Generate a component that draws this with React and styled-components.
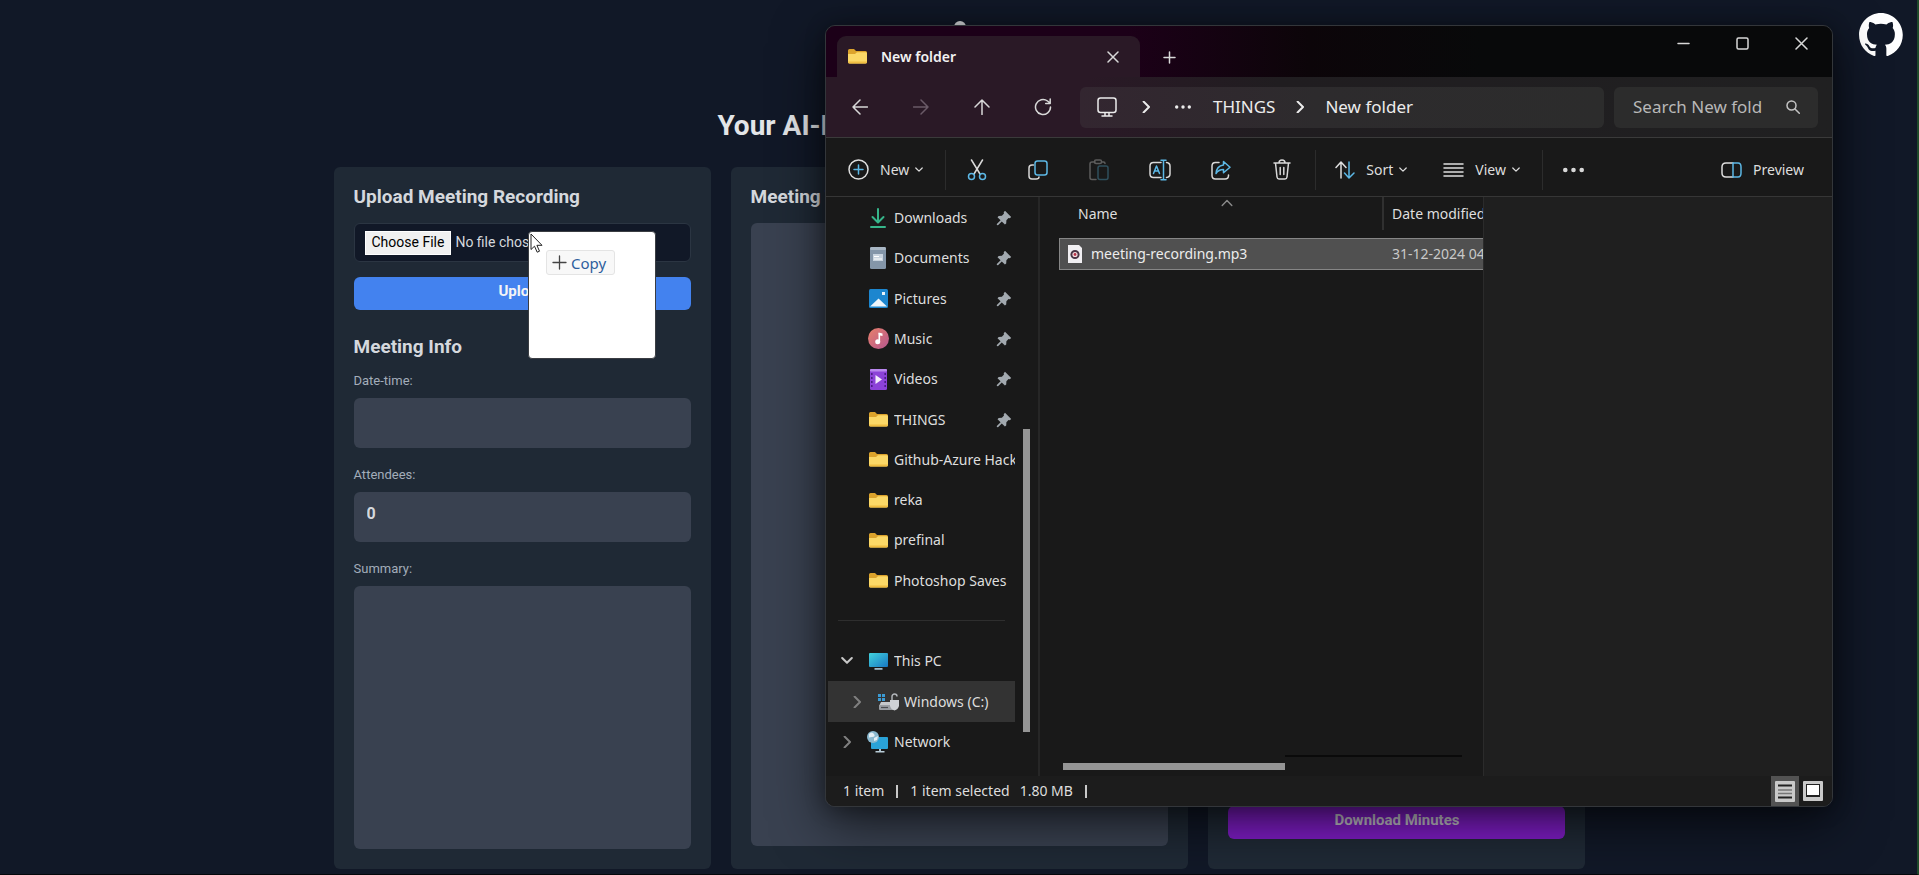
import React from "react";
import styled, { createGlobalStyle } from "styled-components";

const GlobalStyle = createGlobalStyle`
  *, *::before, *::after { box-sizing: border-box; }
  body { margin: 0; background: #111827; }
  button, input, textarea { font: inherit; color: inherit; }
  h1, h2 { margin: 0; }
  svg { display: block; flex: none; }
`;

/* ---------- web page ---------- */

const Page = styled.div`
  position: relative;
  display: flex;
  flex-direction: column;
  align-items: center;
  min-height: 100vh;
  padding: 0 22px 5px 24px;
  overflow: hidden;
  background: #111827;
  border-right: 2px solid #1f4a2a;
  border-bottom: 1px solid #05070b;
  color: #d5d8dd;
  font-family: Roboto, "Liberation Sans", sans-serif;
`;

const PageHeader = styled.header`
  display: flex;
  flex-direction: column;
  align-items: center;
  padding-top: 21px;
  height: 167px;
`;

const PageTitle = styled.h1`
  margin-top: 47px;
  font-size: 28px;
  line-height: 36px;
  font-weight: 700;
  color: #e3e5e8;
`;

const GithubLink = styled.a`
  position: absolute;
  top: 13px;
  right: 14px;
  color: #fff;
`;

const Columns = styled.main`
  flex: 1;
  display: grid;
  grid-template-columns: 14fr 17fr 14fr;
  gap: 20px;
  width: 100%;
  max-width: 1252px;
`;

const Card = styled.section`
  display: flex;
  flex-direction: column;
  padding: 20px 20px ${(p) => p.$bottom || 20}px;
  border-radius: 6px;
  background: #1f2935;
`;

const CardTitle = styled.h2`
  margin-bottom: 16px;
  font-size: 19px;
  line-height: 20px;
  font-weight: 700;
`;

const FileInput = styled.input`
  width: 100%;
  height: 39px;
  padding: 7px 10px;
  border: 1px solid #2b3542;
  border-radius: 6px;
  background: #111827;
  font-size: 14px;
  line-height: 20px;

  &::file-selector-button {
    height: 24px;
    padding: 0 6px 4px;
    margin-right: 4px;
    border: 1px solid #fff;
    background: #f0f0f0;
    color: #000;
    font: inherit;
  }
`;

const ActionButton = styled.button`
  width: 100%;
  height: 33px;
  padding: 0 0 6px;
  border: 0;
  border-radius: 6px;
  background: ${(p) => p.$color};
  color: ${(p) => p.$text || "#f3f4f6"};
  font-size: 15px;
  font-weight: 700;
`;

const UploadForm = styled.form`
  display: flex;
  flex-direction: column;
  gap: 15px;
  margin-bottom: 27px;
`;

const Field = styled.div`
  display: flex;
  flex-direction: column;
  gap: 9px;
  flex: ${(p) => (p.$grow ? 1 : "none")};
  & + & { margin-top: 19px; }
`;

const FieldLabel = styled.label`
  font-size: 13px;
  line-height: 16px;
  color: #a3adba;
`;

const TextInput = styled.input`
  width: 100%;
  height: 50px;
  padding: 0 13px 8px;
  border: 0;
  border-radius: 6px;
  background: #394150;
  font-size: 16px;
  font-weight: 700;
`;

const TextBox = styled.textarea`
  flex: 1;
  width: 100%;
  padding: 12px;
  border: 0;
  border-radius: 6px;
  background: #394150;
  resize: none;
`;

const TranscriptBox = styled.div`
  flex: 1;
  border-radius: 6px;
  background: #394150;
`;

const MinutesBox = styled(TranscriptBox)`
  margin-bottom: 16px;
`;

/* ---------- file manager window ---------- */

const WindowFrame = styled.div`
  position: absolute;
  top: 25px;
  right: 84px;
  bottom: 67px;
  left: 825px;
  display: flex;
  border-radius: 10px;
  box-shadow: 0 16px 52px rgba(0, 0, 0, 0.62), 0 2px 20px rgba(0, 0, 0, 0.3);
`;

const Window = styled.section`
  flex: 1;
  min-width: 0;
  display: flex;
  flex-direction: column;
  overflow: hidden;
  border: 1px solid #33363a;
  border-radius: 10px;
  background: #191919;
  color: #dedede;
  font-family: "Noto Sans", "Open Sans", sans-serif;
  font-size: 14px;
  line-height: 20px;
`;

const TitleBar = styled.div`
  display: flex;
  flex: none;
  align-items: flex-end;
  height: 51px;
  padding-left: 11px;
  background: linear-gradient(90deg, #1c0018 0%, #1c0018 30%, #0c0509 48%, #08090a 65%);
`;

const Tab = styled.div`
  display: flex;
  align-items: center;
  width: 303px;
  height: 41px;
  padding: 0 19px 0 11px;
  border-radius: 9px 9px 0 0;
  background: #2a1926;
  font-weight: 600;
  color: #f2f2f2;
`;

const TabName = styled.span`
  flex: 1;
  margin-left: 14px;
`;

const IconButton = styled.button`
  display: flex;
  align-items: center;
  justify-content: center;
  flex: none;
  width: ${(p) => p.$size || 40}px;
  height: ${(p) => p.$height || 40}px;
  padding: 0;
  border: 0;
  background: none;
  color: ${(p) => (p.$dim ? "#6a5a67" : "#d8d8d8")};
`;

const WindowButtons = styled.div`
  display: flex;
  align-self: flex-start;
  gap: 19px;
  margin-left: auto;
  padding-right: 11px;
`;

const NavBar = styled.div`
  display: flex;
  flex: none;
  align-items: center;
  gap: 10px;
  height: 61px;
  padding: 0 14px;
  border-bottom: 1px solid #3a3a3a;
  background: linear-gradient(90deg, #2a1926 0%, #2a1926 26%, #201d20 45%, #202021 100%);
`;

const NavButtons = styled.div`
  display: flex;
  gap: 21px;
  margin-right: 7px;
`;

const AddressBar = styled.nav`
  display: flex;
  flex: 1;
  align-items: center;
  height: 41px;
  padding-left: 17px;
  border-radius: 6px;
  background: linear-gradient(90deg, #332630, #2d2b2d 45%, #2c2c2c);
  font-size: 17px;
  color: #ececec;
`;

const Crumb = styled.a`
  color: inherit;
  text-decoration: none;
`;

const CrumbGap = styled.span`
  display: flex;
  justify-content: center;
  width: ${(p) => p.$width}px;
`;

const SearchBox = styled.label`
  display: flex;
  align-items: center;
  width: 204px;
  height: 41px;
  padding: 0 18px 0 19px;
  border-radius: 6px;
  background: #2c2c2c;
  color: #c4c4c4;
`;

const SearchInput = styled.input`
  flex: 1;
  min-width: 0;
  padding: 0;
  border: 0;
  background: none;
  font-size: 17px;
  &::placeholder { color: #b8b8b8; opacity: 1; }
`;

const CommandBar = styled.div`
  display: flex;
  flex: none;
  align-items: center;
  height: 59px;
  padding: 5px 28px 0 22px;
  border-bottom: 1px solid #363636;
`;

const CommandButton = styled.button`
  display: flex;
  align-items: center;
  gap: 6px;
  height: 40px;
  padding: 0;
  border: 0;
  background: none;
  & > svg:first-child { margin-right: 5px; }
`;

const IconGroup = styled.div`
  display: flex;
  gap: 21px;
  margin-left: 22px;
  padding: 0 13px 0 11px;
  border: solid #2c2c2c;
  border-width: 0 1px;
`;

const MenuGroup = styled.div`
  display: flex;
  gap: 36px;
  padding: 0 22px 0 19px;
  border-right: 1px solid #2c2c2c;
`;

const PreviewButton = styled(CommandButton)`
  margin-left: auto;
`;

const Body = styled.div`
  display: flex;
  flex: 1;
  min-height: 0;
`;

const Sidebar = styled.div`
  display: flex;
  flex: none;
  width: 214px;
  border-right: 2px solid #262626;
`;

const Tree = styled.ul`
  display: grid;
  grid-auto-rows: 1fr;
  width: 189px;
  margin: 0;
  padding: 1px 0 14px 2px;
  list-style: none;
`;

const TreeRow = styled.li`
  display: flex;
  align-items: center;
  min-width: 0;
  overflow: hidden;
  padding-left: ${(p) => (p.$nested ? 18 : 8)}px;
  background: ${(p) => (p.$selected ? "#333" : "none")};
`;

const TreeArrow = styled.span`
  display: flex;
  justify-content: center;
  flex: none;
  width: 22px;
  margin-right: 10px;
  color: ${(p) => (p.$open ? "#c8c8c8" : "#808080")};
`;

const TreeIcon = styled.span`
  display: flex;
  justify-content: center;
  flex: none;
  width: 20px;
  margin-right: 6px;
`;

const TreeName = styled.span`
  flex: 1;
  min-width: 0;
  overflow: hidden;
  white-space: nowrap;
`;

const TreePin = styled.span`
  flex: none;
  margin-right: 3px;
  color: #a2a9af;
`;

const TreeDivider = styled.li`
  align-self: center;
  height: 1px;
  margin: 0 10px;
  background: #2e2e2e;
`;

const ScrollTrack = styled.div`
  padding: 232px 0 44px 8px;
`;

const ScrollThumb = styled.div`
  width: 7px;
  height: 100%;
  background: #959595;
`;

const Files = styled.div`
  display: flex;
  flex-direction: column;
  width: 443px;
  min-width: 0;
  padding-left: 19px;
  overflow: hidden;
`;

const FileTable = styled.table`
  width: 560px;
  table-layout: fixed;
  border-collapse: separate;
  border-spacing: 0;
`;

const HeadCell = styled.th`
  position: relative;
  width: ${(p) => p.$width}px;
  height: 33px;
  padding: 0 0 0 ${(p) => p.$indent}px;
  border-right: 2px solid #303030;
  text-align: left;
  font-weight: 400;
`;

const SortMark = styled.span`
  position: absolute;
  top: 0;
  left: 50%;
  color: #8a8a8a;
`;

const SpacerRow = styled.tr`
  height: 8px;
`;

const FileCell = styled.td`
  height: 32px;
  padding: 0 0 0 8px;
  border: solid #868686;
  border-width: 1px 0 1px ${(p) => (p.$first ? 1 : 0)}px;
  background: #505050;
  color: ${(p) => (p.$first ? "#ececec" : "#c9c9c9")};
  white-space: nowrap;
`;

const FileName = styled.span`
  display: flex;
  align-items: center;
  gap: 9px;
`;

const HorizontalScroll = styled.div`
  display: flex;
  margin-top: auto;
  padding: 0 21px 6px 4px;
`;

const HorizontalThumb = styled.div`
  width: 222px;
  height: 7px;
  margin-top: 8px;
  background: #959595;
`;

const HorizontalEdge = styled.div`
  flex: 1;
  height: 2px;
  background: #0a0a0a;
`;

const PreviewPane = styled.aside`
  flex: 1;
  border-left: 1px solid #2b2b2b;
  background: #1f1f1f;
`;

const StatusBar = styled.footer`
  display: flex;
  flex: none;
  align-items: center;
  height: 30px;
  padding: 0 5px 0 17px;
  background: #1c1c1c;
`;

const StatusDivider = styled.span`
  width: 2px;
  height: 13px;
  margin: 0 12px;
  background: #c8c8c8;
`;

const StatusText = styled.span`
  margin-right: ${(p) => p.$gap || 0}px;
`;

const LayoutButtons = styled.div`
  display: flex;
  margin-left: auto;
`;

const LayoutButton = styled.button`
  display: flex;
  align-items: center;
  justify-content: center;
  width: 28px;
  height: 30px;
  padding: 0;
  border: 0;
  background: ${(p) => (p.$active ? "#525252" : "none")};
`;

/* ---------- drag preview ---------- */

const DragGhost = styled.div`
  position: absolute;
  top: 231px;
  left: 528px;
  width: 128px;
  height: 128px;
  padding: 18px 0 0 17px;
  border: 1px solid #3a3d42;
  border-radius: 4px;
  background: #fff;
  font-family: "Noto Sans", "Open Sans", sans-serif;
`;

const DragTag = styled.div`
  display: flex;
  align-items: center;
  gap: 4px;
  width: 69px;
  height: 25px;
  padding-left: 5px;
  border: 1px solid #e4e4e4;
  border-radius: 3px;
  background: #f8f8f8;
  color: #2f5f9e;
  font-size: 15px;
  line-height: 20px;
`;

const Cursor = styled.svg`
  position: absolute;
  top: 1px;
  left: 1px;
`;

/* ---------- icons ---------- */

const BLUE = "#5cb8e6";

const Icon = ({ size = 20, w, h, children, width = 1.5, box }) => (
  <svg
    width={w || size}
    height={h || size}
    viewBox={box || `0 0 ${w || size} ${h || size}`}
    fill="none"
    stroke="currentColor"
    strokeWidth={width}
    strokeLinecap="round"
    strokeLinejoin="round"
    aria-hidden="true"
  >
    {children}
  </svg>
);

const LogoMark = () => (
  <svg width="40" height="40" viewBox="0 0 40 40" fill="#dfe1e4" aria-hidden="true">
    <circle cx="20" cy="6" r="6" />
    <rect x="18" y="10" width="4" height="8" />
    <rect x="5" y="17" width="30" height="21" rx="6" />
  </svg>
);

const GithubMark = () => (
  <svg width="44" height="43" viewBox="0 0 98 96" fill="currentColor" aria-hidden="true">
    <path
      fillRule="evenodd"
      clipRule="evenodd"
      d="M48.854 0C21.839 0 0 22 0 49.217c0 21.756 13.993 40.172 33.405 46.69 2.427.49 3.316-1.059 3.316-2.362 0-1.141-.08-5.052-.08-9.127-13.59 2.934-16.42-5.867-16.42-5.867-2.184-5.704-5.42-7.17-5.42-7.17-4.448-3.015.324-3.015.324-3.015 4.934.326 7.523 5.052 7.523 5.052 4.367 7.496 11.404 5.378 14.235 4.074.404-3.178 1.699-5.378 3.074-6.6-10.839-1.141-22.243-5.378-22.243-24.283 0-5.378 1.94-9.778 5.014-13.2-.485-1.222-2.184-6.275.486-13.038 0 0 4.125-1.304 13.426 5.052a46.97 46.97 0 0 1 12.214-1.63c4.125 0 8.33.571 12.213 1.63 9.302-6.356 13.427-5.052 13.427-5.052 2.67 6.763.97 11.816.485 13.038 3.155 3.422 5.015 7.822 5.015 13.2 0 18.905-11.404 23.06-22.324 24.283 1.78 1.548 3.316 4.481 3.316 9.126 0 6.6-.08 11.897-.08 13.526 0 1.304.89 2.853 3.316 2.364 19.412-6.52 33.405-24.935 33.405-46.691C97.707 22 75.788 0 48.854 0z"
    />
  </svg>
);

const FolderIcon = () => (
  <svg width="19" height="15" viewBox="0 0 19 15" aria-hidden="true">
    <path d="M0 1.5Q0 0 1.5 0H6l2 2h9.500Q19 2 19 3.500V13H0z" fill="#dca32c" />
    <path d="M0 5h7l2-1.800h8.600q1.400 0 1.400 1.400V13q0 1.500-1.500 1.500h-16Q0 14.500 0 13z" fill="#fbd867" />
    <path d="M0 12.500h19q0 2-1.500 2h-16Q0 14.500 0 12.500z" fill="#f0bd42" />
  </svg>
);

const DownloadIcon = () => (
  <Icon w={16} h={20} width={2}>
    <g stroke="#36b58a">
      <path d="M8 1v13M2.500 9L8 14.500 13.500 9M1 19h14" />
    </g>
  </Icon>
);

const DocumentIcon = () => (
  <svg width="16" height="22" viewBox="0 0 16 22" aria-hidden="true">
    <rect width="16" height="22" rx="1.500" fill="#8496a9" />
    <rect width="16" height="3" rx="1.500" fill="#a9b7c5" />
    <rect x="3" y="7" width="10" height="7" fill="#c9d4df" />
    <path d="M4 9.500h5M4 12h8" stroke="#fff" strokeWidth="1.200" />
  </svg>
);

const PictureIcon = () => (
  <svg width="19" height="19" viewBox="0 0 19 19" aria-hidden="true">
    <rect width="19" height="19" rx="1.500" fill="#1c86cf" />
    <path d="M1 17.500l8.500-8 8.500 8z" fill="#eef6fc" />
    <rect x="13" y="3" width="3" height="3" fill="#e8f4fc" />
  </svg>
);

const MusicIcon = () => (
  <svg width="21" height="21" viewBox="0 0 21 21" aria-hidden="true">
    <defs>
      <linearGradient id="music" x1="0" y1="0" x2="1" y2="1">
        <stop offset="0" stopColor="#e8806a" />
        <stop offset="1" stopColor="#b5568f" />
      </linearGradient>
    </defs>
    <circle cx="10.500" cy="10.500" r="10.500" fill="url(#music)" />
    <path d="M10.500 4.500l4 1v2.500l-2.500-.6v6.100" fill="#fff" />
    <rect x="10.500" y="5" width="1.600" height="9" fill="#fff" />
    <circle cx="9.700" cy="13.800" r="2.500" fill="#fff" />
  </svg>
);

const VideoIcon = () => (
  <svg width="17" height="21" viewBox="0 0 17 21" aria-hidden="true">
    <rect width="17" height="21" rx="1.500" fill="#8c42d8" />
    <rect width="17" height="2.500" rx="1" fill="#b987ee" />
    <path d="M5.500 6v9l6.500-4.500z" fill="#f4ecfc" />
    <path d="M1.800 4v16M15.200 4v16" stroke="#4b1c86" strokeWidth="1.600" strokeDasharray="2 2" />
  </svg>
);

const PcIcon = () => (
  <svg width="19" height="17" viewBox="0 0 19 17" aria-hidden="true">
    <defs>
      <linearGradient id="pc" x1="0" y1="0" x2="1" y2="1">
        <stop offset="0" stopColor="#42d3dd" />
        <stop offset="1" stopColor="#1878c4" />
      </linearGradient>
    </defs>
    <rect width="19" height="14" rx="1" fill="url(#pc)" />
    <rect x="5.500" y="15" width="8" height="1.800" fill="#9fb9c8" />
  </svg>
);

const DriveIcon = () => (
  <svg width="22" height="18" viewBox="0 0 22 18" aria-hidden="true">
    <path d="M1 1h3v3H1zM5 1h3v3H5zM1 5h3v3H1zM5 5h3v3H5z" fill="#3b9bd4" />
    <path d="M4 9h12l2 4H2z" fill="#c6c9cc" />
    <rect x="2" y="12" width="17" height="5" rx="1" fill="#9a9ea3" />
    <path d="M4 14.500h7" stroke="#4a4d50" strokeWidth="1.200" />
    <path d="M15 7V3.500a2.500 2.500 0 0 1 5 0" stroke="#b0b4b8" strokeWidth="1.500" fill="none" />
    <path d="M13 7h9v6q-1 3.500-4.500 4.500Q14 16.500 13 13z" fill="#cfd2d6" />
  </svg>
);

const NetworkIcon = () => (
  <svg width="22" height="22" viewBox="0 0 22 22" aria-hidden="true">
    <rect x="4" y="6" width="17" height="12" rx="1" fill="#2aa3d8" />
    <rect x="12" y="18" width="2" height="2" fill="#a8c0cc" />
    <rect x="8.500" y="20" width="9" height="1.500" fill="#b9cdd8" />
    <circle cx="6" cy="6" r="6" fill="#8ab9cf" />
    <path d="M2 3q3-3 5 0t-2 3-3 2zM7 7l4-2-1 4-3 1z" fill="#e3eff5" />
  </svg>
);

const PinIcon = () => (
  <svg width="16" height="16" viewBox="0 0 16 16" fill="currentColor" aria-hidden="true">
    <path d="M9 .8L15.200 7 13.800 8.300 12.500 8.100 10.400 10.300 10.200 13.400 8.900 14.600 5.800 11.500 2 15.300.9 14.900.8 14 4.600 10.300 1.500 7.200 2.700 5.900 5.900 5.700 8 3.500 7.700 2.200z" />
  </svg>
);

const Mp3Icon = () => (
  <svg width="14" height="18" viewBox="0 0 14 18" aria-hidden="true">
    <path d="M0 0h11l3 3v15H0z" fill="#f1eff2" />
    <circle cx="7" cy="9.500" r="3.600" fill="#f7dfe0" stroke="#4a3546" strokeWidth="2" />
    <circle cx="7" cy="9.500" r="1.400" fill="#b8324a" />
  </svg>
);

const Chevron = ({ d = "down", size = 8, width = 1.5 }) => {
  const paths = { down: "M1 2.500L5 6.500L9 2.500", right: "M3 0.500L7.500 5L3 9.500", up: "M1 7L5 3L9 7" };
  return (
    <Icon w={size} h={size} box="0 0 10 10" width={width}>
      <path d={paths[d]} />
    </Icon>
  );
};

const Dots = ({ size = 20, r = 2 }) => (
  <svg width={size} height="6" viewBox={`0 0 ${size} 6`} fill="currentColor" aria-hidden="true">
    <circle cx={r} cy="3" r={r} />
    <circle cx={size / 2} cy="3" r={r} />
    <circle cx={size - r} cy="3" r={r} />
  </svg>
);

const commandIcons = [
  ["Cut", (
    <Icon w={20} h={22}>
      <path d="M4.500 1l8.500 14M15.500 1L7 15" />
      <g stroke={BLUE}><circle cx="4.500" cy="17.500" r="3" /><circle cx="15.500" cy="17.500" r="3" /></g>
    </Icon>
  )],
  ["Copy", (
    <Icon w={20} h={20}>
      <path d="M5.500 5H4Q1 5 1 8v8q0 3 3 3h4q3 0 3-2" />
      <rect x="7" y="1" width="12" height="14" rx="2.500" stroke={BLUE} />
    </Icon>
  )],
  ["Paste", (
    <Icon w={20} h={22}>
      <g stroke="#5c5c5c">
        <path d="M6 3H3Q1 3 1 5v13.500q0 2 2 2h4M13 3h1.500Q16 3 16 4.500" />
        <rect x="5.500" y="1" width="7" height="3.500" rx="1.500" />
      </g>
      <rect x="9" y="7" width="10" height="13.500" rx="2" stroke="#2f4f5c" />
    </Icon>
  )],
  ["Rename", (
    <Icon w={22} h={22}>
      <path d="M12 3.500H4.500Q1 3.500 1 7v8q0 3.500 3.500 3.500H12M17.500 3.500Q21 4 21 7v8q0 3-3.500 3.500" />
      <g stroke={BLUE}>
        <path d="M4.500 14.500L7.500 7l3 7.500M5.500 12h4" />
        <path d="M14.500 1.500v19M12 1.200h5M12 20.800h5" />
      </g>
    </Icon>
  )],
  ["Share", (
    <Icon w={20} h={20}>
      <path d="M8 2.500H4.500Q1 2.500 1 6v9.500Q1 19 4.500 19H14q3.500 0 3.500-3.500V15" />
      <path d="M12.500 1.500l6.500 5.700-6.500 5.600V9.500Q7.500 9.500 5 13.500 5.500 6 12.500 5z" stroke={BLUE} />
    </Icon>
  )],
  ["Delete", (
    <Icon w={18} h={21}>
      <path d="M1 4h16M6 4q0-3 3-3t3 3M2.500 4L4 18q.3 2 2 2h6q1.700 0 2-2l1.500-14M7.200 8.500v7M10.800 8.500v7" />
    </Icon>
  )],
];

const places = [
  { name: "Downloads", icon: <DownloadIcon />, pinned: true },
  { name: "Documents", icon: <DocumentIcon />, pinned: true },
  { name: "Pictures", icon: <PictureIcon />, pinned: true },
  { name: "Music", icon: <MusicIcon />, pinned: true },
  { name: "Videos", icon: <VideoIcon />, pinned: true },
  { name: "THINGS", icon: <FolderIcon />, pinned: true },
  { name: "Github-Azure Hackathon", icon: <FolderIcon /> },
  { name: "reka", icon: <FolderIcon /> },
  { name: "prefinal", icon: <FolderIcon /> },
  { name: "Photoshop Saves", icon: <FolderIcon /> },
];

const devices = [
  { name: "This PC", icon: <PcIcon />, arrow: "down" },
  { name: "Windows (C:)", icon: <DriveIcon />, arrow: "right", nested: true, selected: true },
  { name: "Network", icon: <NetworkIcon />, arrow: "right" },
];

function TreeItem({ item }) {
  return (
    <TreeRow $nested={item.nested} $selected={item.selected}>
      <TreeArrow $open={item.arrow === "down"}>
        {item.arrow && <Chevron d={item.arrow} size={12} width={1.7} />}
      </TreeArrow>
      <TreeIcon>{item.icon}</TreeIcon>
      <TreeName>{item.name}</TreeName>
      {item.pinned && <TreePin><PinIcon /></TreePin>}
    </TreeRow>
  );
}

function FileWindow() {
  return (
    <Window aria-label="New folder">
      <TitleBar>
        <Tab>
          <FolderIcon />
          <TabName>New folder</TabName>
          <IconButton $size={16} aria-label="Close tab">
            <Icon size={12}><path d="M1 1l10 10M11 1L1 11" /></Icon>
          </IconButton>
        </Tab>
        <IconButton $size={58} aria-label="New tab">
          <Icon size={13}><path d="M6.500 1v11M1 6.500h11" /></Icon>
        </IconButton>
        <WindowButtons>
          <IconButton $height={35} aria-label="Minimize">
            <Icon size={13}><path d="M1 6.500h11" /></Icon>
          </IconButton>
          <IconButton $height={35} aria-label="Maximize">
            <Icon size={13}><rect x="1" y="1" width="11" height="11" rx="1.500" /></Icon>
          </IconButton>
          <IconButton $height={35} aria-label="Close">
            <Icon size={13}><path d="M1 1l11 11M12 1L1 12" /></Icon>
          </IconButton>
        </WindowButtons>
      </TitleBar>

      <NavBar>
        <NavButtons>
          <IconButton aria-label="Back">
            <Icon size={16}><path d="M15.500 8H1M8 1L1 8l7 7" /></Icon>
          </IconButton>
          <IconButton aria-label="Forward" $dim>
            <Icon size={16}><path d="M.5 8H15M8 1l7 7-7 7" /></Icon>
          </IconButton>
          <IconButton aria-label="Up">
            <Icon size={16}><path d="M8 15.500V1M1 8l7-7 7 7" /></Icon>
          </IconButton>
          <IconButton aria-label="Refresh">
            <Icon size={18}><path d="M16.500 9A7.500 7.500 0 1 1 13.500 3L16 5M16.200 1v4.500h-4.500" /></Icon>
          </IconButton>
        </NavButtons>
        <AddressBar aria-label="Path">
          <Icon w={20} h={20}>
            <rect x="1" y="1" width="18" height="14.500" rx="2.500" />
            <path d="M8 16v2.500M12 16v2.500M5 19h10" />
          </Icon>
          <CrumbGap $width={58}><Chevron d="right" size={12} width={1.7} /></CrumbGap>
          <CrumbGap $width={16}><Dots size={16} r={1.7} /></CrumbGap>
          <CrumbGap $width={22} />
          <Crumb href="#things">THINGS</Crumb>
          <CrumbGap $width={50}><Chevron d="right" size={12} width={1.7} /></CrumbGap>
          <Crumb href="#new-folder">New folder</Crumb>
        </AddressBar>
        <SearchBox>
          <SearchInput type="text" placeholder="Search New fold" aria-label="Search New folder" />
          <Icon size={14}><circle cx="5.500" cy="5.500" r="4.500" /><path d="M9 9l4.300 4.300" /></Icon>
        </SearchBox>
      </NavBar>

      <CommandBar>
        <CommandButton>
          <Icon size={21}>
            <circle cx="10.500" cy="10.500" r="9.500" />
            <path d="M10.500 6v9M6 10.500h9" stroke={BLUE} />
          </Icon>
          New
          <Chevron />
        </CommandButton>
        <IconGroup>
          {commandIcons.map(([label, icon]) => (
            <IconButton key={label} aria-label={label}>{icon}</IconButton>
          ))}
        </IconGroup>
        <MenuGroup>
          <CommandButton>
            <Icon w={20} h={18}>
              <path d="M6 17V1.500M1 6.500l5-5.500 5 5.500" />
              <path d="M14 1v15.500M9.500 12l4.500 5 5-5" stroke={BLUE} />
            </Icon>
            Sort
            <Chevron />
          </CommandButton>
          <CommandButton>
            <Icon w={21} h={14}><path d="M1 1h19M1 5h19M1 9h19M1 13h19" /></Icon>
            View
            <Chevron />
          </CommandButton>
        </MenuGroup>
        <IconButton $size={62} aria-label="More"><Dots size={21} r={2.3} /></IconButton>
        <PreviewButton>
          <Icon w={21} h={16}>
            <path d="M12 1H5Q1 1 1 5v6q0 4 4 4h7" />
            <path d="M12 1h5q3 0 3 4v6q0 4-3 4h-5z" stroke={BLUE} />
          </Icon>
          Preview
        </PreviewButton>
      </CommandBar>

      <Body>
        <Sidebar>
          <Tree>
            {places.map((p) => <TreeItem key={p.name} item={p} />)}
            <TreeDivider />
            {devices.map((p) => <TreeItem key={p.name} item={p} />)}
          </Tree>
          <ScrollTrack><ScrollThumb /></ScrollTrack>
        </Sidebar>
        <Files>
          <FileTable>
            <thead>
              <tr>
                <HeadCell $width={325} $indent={19}>
                  Name
                  <SortMark><Chevron d="up" size={12} width={1.2} /></SortMark>
                </HeadCell>
                <HeadCell $width={235} $indent={8}>Date modified</HeadCell>
              </tr>
            </thead>
            <tbody>
              <SpacerRow />
              <tr>
                <FileCell $first><FileName><Mp3Icon />meeting-recording.mp3</FileName></FileCell>
                <FileCell>31-12-2024 04:30</FileCell>
              </tr>
            </tbody>
          </FileTable>
          <HorizontalScroll><HorizontalThumb /><HorizontalEdge /></HorizontalScroll>
        </Files>
        <PreviewPane />
      </Body>

      <StatusBar>
        <StatusText>1 item</StatusText>
        <StatusDivider />
        <StatusText $gap={10}>1 item selected</StatusText>
        <StatusText>1.80 MB</StatusText>
        <StatusDivider />
        <LayoutButtons>
          <LayoutButton $active aria-label="Details">
            <svg width="20" height="21" viewBox="0 0 20 21" aria-hidden="true">
              <rect width="20" height="21" rx="1" fill="#c9c9c9" />
              <path d="M3 4.500h14M3 16.500h14" stroke="#222" strokeWidth="2" />
              <path d="M3 9h14M3 12.500h14" stroke="#777" strokeWidth="1.500" />
            </svg>
          </LayoutButton>
          <LayoutButton aria-label="Large icons">
            <svg width="20" height="20" viewBox="0 0 20 20" aria-hidden="true">
              <rect width="20" height="20" rx="1" fill="#c9c9c9" />
              <rect x="3" y="3" width="14" height="13" fill="#222" />
              <rect x="4" y="4" width="12" height="10" fill="#fff" />
            </svg>
          </LayoutButton>
        </LayoutButtons>
      </StatusBar>
    </Window>
  );
}

export default function App() {
  return (
    <Page>
      <GlobalStyle />
      <PageHeader>
        <LogoMark />
        <PageTitle>Your AI-Powered Meeting Summarizer</PageTitle>
      </PageHeader>
      <GithubLink href="#github" aria-label="GitHub"><GithubMark /></GithubLink>

      <Columns>
        <Card>
          <CardTitle>Upload Meeting Recording</CardTitle>
          <UploadForm onSubmit={(e) => e.preventDefault()}>
            <FileInput type="file" aria-label="Meeting recording" />
            <ActionButton $color="#4382ef">Upload</ActionButton>
          </UploadForm>
          <CardTitle>Meeting Info</CardTitle>
          <Field>
            <FieldLabel htmlFor="date">Date-time:</FieldLabel>
            <TextInput id="date" readOnly />
          </Field>
          <Field>
            <FieldLabel htmlFor="attendees">Attendees:</FieldLabel>
            <TextInput id="attendees" value="0" readOnly />
          </Field>
          <Field $grow>
            <FieldLabel htmlFor="summary">Summary:</FieldLabel>
            <TextBox id="summary" readOnly />
          </Field>
        </Card>
        <Card $bottom={23}>
          <CardTitle>Meeting Transcript</CardTitle>
          <TranscriptBox />
        </Card>
        <Card $bottom={30}>
          <CardTitle>Meeting Minutes</CardTitle>
          <MinutesBox />
          <ActionButton type="button" $color="#7f1dc6" $text="#c9c6cf">Download Minutes</ActionButton>
        </Card>
      </Columns>

      <WindowFrame>
        <FileWindow />
      </WindowFrame>

      <DragGhost>
        <DragTag>
          <Icon size={15} width={1.3}><path d="M7.500 1v13M1 7.500h13" stroke="#444" /></Icon>
          Copy
        </DragTag>
        <Cursor width="13" height="21" viewBox="0 0 13 21" aria-hidden="true">
          <path d="M1 1v15.500l3.500-3.300 2.700 6 2.300-1-2.600-5.900H12z" fill="#fff" stroke="#222" />
        </Cursor>
      </DragGhost>
    </Page>
  );
}
